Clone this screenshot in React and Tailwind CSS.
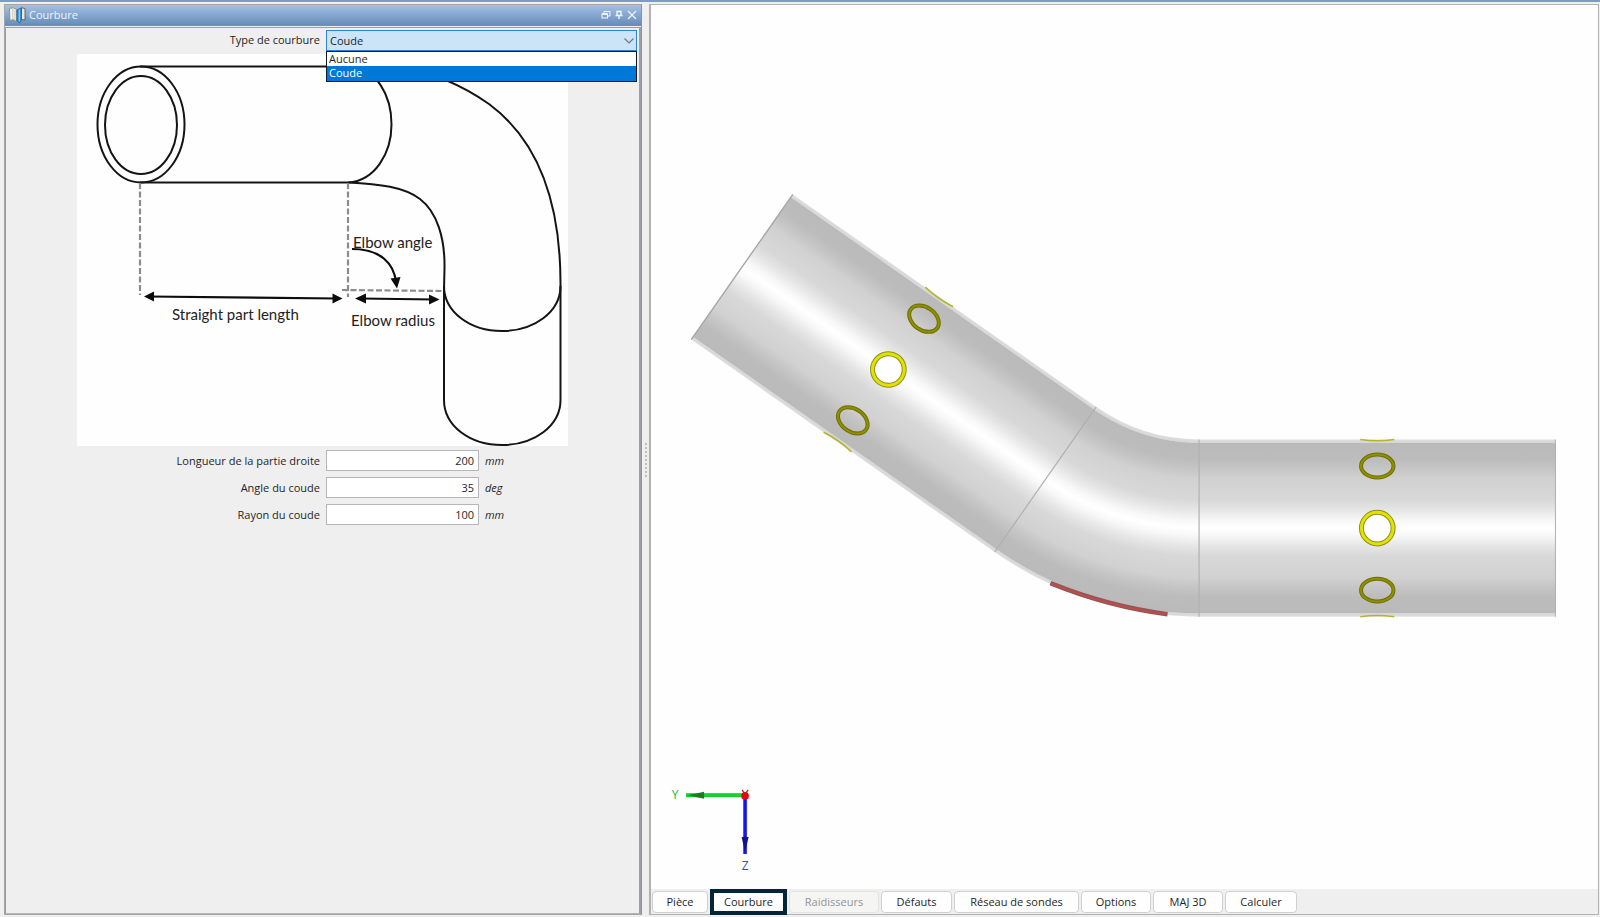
import React, { useState } from "react";

const fields = [
  { id: "length", label: "Longueur de la partie droite", value: "200", unit: "mm" },
  { id: "angle", label: "Angle du coude", value: "35", unit: "deg" },
  { id: "radius", label: "Rayon du coude", value: "100", unit: "mm" },
];

const steps = [
  { label: "Pièce", width: "w-[56px]" },
  { label: "Courbure", width: "w-[77px]", active: true },
  { label: "Raidisseurs", width: "w-[90px]", disabled: true },
  { label: "Défauts", width: "w-[71px]" },
  { label: "Réseau de sondes", width: "w-[125px]" },
  { label: "Options", width: "w-[70px]" },
  { label: "MAJ 3D", width: "w-[70px]" },
  { label: "Calculer", width: "w-[72px]" },
];

/* Shading across the pipe wall, from one edge (0) to the other (1). */
const shade = [
  [0, "#dedede"],
  [0.018, "#d6d6d6"],
  [0.022, "#bababa"],
  [0.11, "#bcbcbc"],
  [0.17, "#c6c6c6"],
  [0.22, "#d1d1d1"],
  [0.34, "#d8d8d8"],
  [0.4, "#e6e6e6"],
  [0.46, "#f8f8f8"],
  [0.5, "#ffffff"],
  [0.54, "#f8f8f8"],
  [0.6, "#e6e6e6"],
  [0.66, "#d8d8d8"],
  [0.78, "#d1d1d1"],
  [0.83, "#c6c6c6"],
  [0.89, "#bcbcbc"],
  [0.978, "#bababa"],
  [0.982, "#d6d6d6"],
  [1, "#dedede"],
];

function Probes({ x }) {
  return (
    <g fill="none">
      <ellipse cx={x} cy="466.500" rx="16.200" ry="11.400" stroke="#6f6f00" strokeWidth="4" />
      <ellipse cx={x} cy="466.500" rx="16.200" ry="11.400" stroke="#8f8f00" strokeWidth="2" />
      <circle cx={x} cy="528.500" r="15.800" fill="#fff" stroke="#8f8f1c" strokeWidth="5" />
      <circle cx={x} cy="528.500" r="15.800" stroke="#e2e200" strokeWidth="3" />
      <ellipse cx={x} cy="590.500" rx="16.200" ry="11.400" stroke="#6f6f00" strokeWidth="4" />
      <ellipse cx={x} cy="590.500" rx="16.200" ry="11.400" stroke="#8f8f00" strokeWidth="2" />
      <path d={`M${x - 17} 440Q${x} 442.500 ${x + 17} 440`} stroke="#b5b52c" strokeWidth="1.600" />
      <path d={`M${x - 17} 617Q${x} 614.500 ${x + 17} 617`} stroke="#b5b52c" strokeWidth="1.600" />
    </g>
  );
}

function PipeScene() {
  return (
    <svg
      viewBox="652 7 946 881"
      preserveAspectRatio="xMidYMid meet"
      className="block h-full w-full"
      role="img"
      aria-label="Vue 3D"
    >
      <defs>
        <linearGradient id="straight" x1="0" y1="440" x2="0" y2="617" gradientUnits="userSpaceOnUse">
          {shade.map(([t, c]) => (
            <stop key={t} offset={t} stopColor={c} />
          ))}
        </linearGradient>
        <radialGradient id="bend" cx="1200" cy="260" r="357" gradientUnits="userSpaceOnUse">
          {shade.map(([t, c]) => (
            <stop key={t} offset={(180 + 177 * t) / 357} stopColor={c} />
          ))}
        </radialGradient>
      </defs>
      <path d="M1199.500 440V617A357 357 0 0 1 995.200 552.400L1096.800 407.400A180 180 0 0 0 1199.500 440Z" fill="url(#bend)" />
      <rect x="1199.500" y="440" width="356" height="177" fill="url(#straight)" />
      <g transform="rotate(35 1200 260)">
        <rect x="830" y="440" width="370.500" height="177" fill="url(#straight)" />
        <path d="M830 440V617" stroke="#a6a6a6" strokeWidth="1.400" />
        <path d="M1200 440V617" stroke="#b0b0b0" strokeWidth="1.200" />
        <Probes x={1008.5} />
      </g>
      <path d="M1199.500 440V617" stroke="#b0b0b0" strokeWidth="1.200" />
      <path d="M1555.500 440V617" stroke="#b0b0b0" strokeWidth="1" />
      <Probes x={1377.5} />
      <path d="M1051 583.500Q1109 607 1168 614.500" fill="none" stroke="#8f5555" strokeWidth="4.600" />
      <path d="M1052 584Q1109 607 1167 614.500" fill="none" stroke="#b84e4e" strokeWidth="2.400" />

      <g fontFamily="Open Sans, sans-serif" fontSize="12" textAnchor="middle">
        <path d="M687 795.500H744" stroke="#4a9a4a" strokeWidth="4" />
        <path d="M687 795.500H744" stroke="#00e61a" strokeWidth="2.400" />
        <path d="M689 795.500L705 792V799Z" fill="#207a20" />
        <path d="M746 798V854" stroke="#5555a0" strokeWidth="4" />
        <path d="M746 798V854" stroke="#1414ff" strokeWidth="2.400" />
        <path d="M742.500 837H749.500L746 852Z" fill="#12128c" />
        <circle cx="746" cy="796" r="3.800" fill="#dd0c0c" />
        <path d="M743 790L749 799M749 790L743 799" stroke="#dd0c0c" strokeWidth="1.200" />
        <text x="676" y="799" fill="#35b535">Y</text>
        <text x="746" y="870" fill="#3048d8">Z</text>
      </g>
    </svg>
  );
}

function ElbowDiagram() {
  return (
    <svg viewBox="77 54 491 392" className="block h-auto w-full bg-[#fefefe]" role="img" aria-label="Schéma du coude">
      <g fill="none" stroke="#141414" strokeWidth="2">
        <ellipse cx="141" cy="124.500" rx="43.500" ry="58" />
        <ellipse cx="141" cy="125" rx="36" ry="49" />
        <path d="M140 66.500H349C377 68 391.500 96 391.500 124.500C391.500 153 375 181 348 182.500" />
        <path d="M140 182.500H348" />
        <path d="M400 66.500C435 73 462 85 489 104C535 138 561 196 560.500 286" />
        <path d="M348 182.500C380 184 404 187 420 199C437 212 445 238 444.500 268L444 290" />
        <path d="M444 286V400M560.500 286V400" />
        <path d="M444 286C444 312 470 331 502 331C534 331 560.500 312 560.500 286" />
        <path d="M444 400C444 426 470 445 502 445C534 445 560.500 426 560.500 400" />
      </g>
      <g fill="none" stroke="#8c8c8c" strokeWidth="2.200" strokeDasharray="6 2.500">
        <path d="M140 183V295" />
        <path d="M348 183V297" />
        <path d="M342 290L444 291" />
      </g>
      <g fill="none" stroke="#0c0c0c" strokeWidth="2.200">
        <path d="M148 296.500L338 298.500" />
        <path d="M360 298.500L435 299.500" />
        <path d="M352 249C381 249 394 264 396 282" />
      </g>
      <g fill="#0c0c0c">
        <path d="M144 296.500L154 291.500V301.500Z" />
        <path d="M342.500 298.500L332.500 293.500V303.500Z" />
        <path d="M355 298.500L366 293.500V303.500Z" />
        <path d="M439.500 299.500L429 294.500V304.500Z" />
        <path d="M397 288.500L390.500 278.500L400.500 277Z" />
      </g>
      <g fill="#222" fontFamily="Lato, Open Sans, sans-serif" fontSize="15">
        <text x="172" y="320">Straight part length</text>
        <text x="353" y="248">Elbow angle</text>
        <text x="351" y="326">Elbow radius</text>
      </g>
    </svg>
  );
}

function PanelIcon() {
  return (
    <svg viewBox="0 0 17 17" className="size-[17px] shrink-0" aria-hidden="true">
      <path d="M0.500 1.500L4 0.800L7.500 2.500V14.500L4 12.500L1 13.500Z" fill="#f7f6ee" stroke="#8a8677" strokeWidth="0.800" />
      <path d="M3.800 1.500V12.500M6 3V13" stroke="#c9c5b4" />
      <path d="M12.500 0.800L16 1.500V13L12.500 12.500Z" fill="#ece9da" stroke="#4c4c4c" strokeWidth="0.800" />
      <path d="M8 3L12.500 0.800V13L10.500 16L8 14Z" fill="#2f8ddb" stroke="#1765ae" strokeWidth="0.800" />
      <path d="M10.300 2.500V14.500" stroke="#a5d5fa" />
    </svg>
  );
}

export default function App() {
  const [values, setValues] = useState(Object.fromEntries(fields.map((f) => [f.id, f.value])));
  const [curve, setCurve] = useState("Coude");

  return (
    <div className="flex h-screen flex-col border-t-2 border-[#7c9cc4] bg-[#efefef] font-['Open_Sans','Noto_Sans',sans-serif] text-[11px] leading-4 text-[#1f1f1f]">
      <div className="flex min-h-0 flex-1 pt-[2px] pr-px pb-[2px] pl-1">
        <section className="flex w-[40%] shrink-0 flex-col border border-[#a5a5a5] border-r-[#8f929a]">
          <header className="flex h-[21px] shrink-0 items-center gap-[3px] border-b border-[#6d8fb8] bg-gradient-to-b from-[#a3c1e4] to-[#688db9] pr-1 pl-1 text-white">
            <PanelIcon />
            <h1 className="flex-1 text-[#eef4fb]">Courbure</h1>
            <button type="button" aria-label="Détacher">
              <svg viewBox="0 0 10 10" className="size-[10px]" fill="none" stroke="#f4f8fc">
                <path d="M3 3V1.500H9V6H7" />
                <rect x="1" y="4" width="5.500" height="4" />
                <path d="M1 4H6.500" strokeWidth="1.500" />
              </svg>
            </button>
            <button type="button" aria-label="Épingler">
              <svg viewBox="0 0 10 10" className="size-[10px]" fill="none" stroke="#f4f8fc" strokeWidth="1.300">
                <path d="M3 1.500H7V5.500H3ZM1.500 5.500H8.500M5 5.500V9" />
              </svg>
            </button>
            <button type="button" aria-label="Fermer">
              <svg viewBox="0 0 10 10" className="size-[10px]" fill="none" stroke="#f4f8fc" strokeWidth="1.100">
                <path d="M1 1L9 9M9 1L1 9" />
              </svg>
            </button>
          </header>

          <div className="mt-px flex min-h-0 flex-1 flex-col border border-r-2 border-[#9c9ea6] border-b-[#b5b5b5] border-l-[#9a9a9e] pt-[2px]">
            <div className="relative z-10 flex items-start pr-[2px]">
              <label htmlFor="curve" className="w-80 shrink-0 pr-[6px] text-right leading-5">
                Type de courbure
              </label>
              <div className="relative flex-1">
                <select
                  id="curve"
                  value={curve}
                  onChange={(e) => setCurve(e.target.value)}
                  className="block h-[21px] w-full appearance-none border border-[#2a84d8] bg-[#cce4f7] pl-[3px] leading-[18px] outline-none"
                >
                  <option>Aucune</option>
                  <option>Coude</option>
                </select>
                <svg viewBox="0 0 10 6" className="pointer-events-none absolute top-[8px] right-[3px] h-[6px] w-[10px]" fill="none" stroke="#707880" strokeWidth="1.200">
                  <path d="M0.500 0.500L5 5L9.500 0.500" />
                </svg>
                <ul role="listbox" aria-label="Type de courbure" className="absolute top-[21px] right-0 left-0 border border-[#101820] bg-white">
                  {["Aucune", "Coude"].map((name) => (
                    <li
                      key={name}
                      role="option"
                      aria-selected={curve === name}
                      onClick={() => setCurve(name)}
                      className={curve === name ? "h-[15px] bg-[#0078d7] pl-[2px] leading-[14px] text-white" : "h-[14px] pl-[2px] leading-[14px]"}
                    >
                      {name}
                    </li>
                  ))}
                </ul>
              </div>
            </div>

            <div className="mx-auto mt-[3px] w-[78%] max-w-[491px]">
              <ElbowDiagram />
            </div>

            <div className="mt-1 flex flex-col gap-[6px]">
              {fields.map((f) => (
                <div key={f.id} className="flex items-center">
                  <label htmlFor={f.id} className="w-80 shrink-0 pr-[6px] text-right">
                    {f.label}
                  </label>
                  <input
                    id={f.id}
                    value={values[f.id]}
                    onChange={(e) => setValues({ ...values, [f.id]: e.target.value })}
                    className="h-[21px] w-[153px] border border-[#b5b5ba] bg-white pr-1 text-right outline-none"
                  />
                  <span className="pl-[6px] italic">{f.unit}</span>
                </div>
              ))}
            </div>
          </div>
        </section>

        <div role="separator" aria-orientation="vertical" className="flex w-[7px] shrink-0 flex-col items-center justify-center gap-[2px]">
          {Array.from({ length: 9 }, (_, i) => (
            <span key={i} className="size-[2px] bg-[#bdbdbd]" />
          ))}
        </div>

        <main className="flex min-w-0 flex-1 flex-col border border-l-2 border-[#b2b2b2] bg-[#fefefe]">
          <div className="min-h-0 flex-1">
            <PipeScene />
          </div>
          <nav className="flex h-[25px] shrink-0 items-center gap-[2px] bg-[#efefef] pl-px" aria-label="Étapes">
            {steps.map((s) => (
              <button
                key={s.label}
                type="button"
                disabled={s.disabled}
                className={`${s.width} ${
                  s.active
                    ? "h-[26px] border-4 border-[#032636] bg-[#fefefe]"
                    : s.disabled
                      ? "h-[22px] rounded border border-[#e3e3e3] bg-[#f5f6f4] text-[#929492]"
                      : "h-[22px] rounded border border-[#d0d0d0] bg-[#fefefe]"
                } shrink-0 text-center leading-4`}
              >
                {s.label}
              </button>
            ))}
          </nav>
        </main>
      </div>
    </div>
  );
}
